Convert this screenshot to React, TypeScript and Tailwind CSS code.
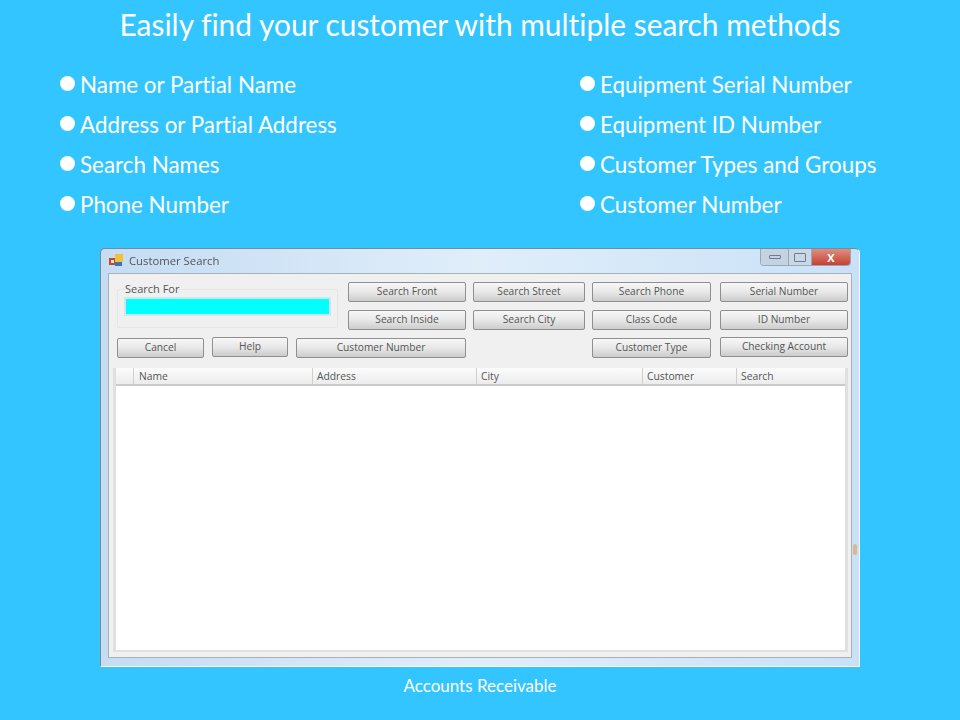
import React from "react";

const left = ["Name or Partial Name", "Address or Partial Address", "Search Names", "Phone Number"];
const right = ["Equipment Serial Number", "Equipment ID Number", "Customer Types and Groups", "Customer Number"];

function Bullets({ items }: { items: string[] }) {
  return (
    <ul className="flex flex-col">
      {items.map((t) => (
        <li key={t} className="flex h-[40px] items-center">
          <span className="mb-[4px] mr-[5px] h-[15px] w-[15px] rounded-full bg-white" />
          <span className="pb-[1px] text-[22.4px] leading-[39px] text-white">{t}</span>
        </li>
      ))}
    </ul>
  );
}

function Btn({ label, className = "" }: { label: string; className?: string }) {
  return (
    <div
      className={`flex h-[20px] shrink-0 items-center justify-center rounded-[2px] border border-[#8f8f8f] bg-gradient-to-b from-[#f7f7f7] via-[#e8e8e8] to-[#cccccc] pb-[1px] text-[10.2px] leading-none text-[#555] ${className}`}
    >
      {label}
    </div>
  );
}

const cols = [
  { label: "", w: "w-[17px]" },
  { label: "Name", w: "w-[179px]" },
  { label: "Address", w: "w-[164px]" },
  { label: "City", w: "w-[166px]" },
  { label: "Customer", w: "w-[94px]" },
  { label: "Search", w: "w-[107px]" },
];

export default function App() {
  return (
    <div className="h-[720px] w-[960px] overflow-hidden bg-[#33c5ff] font-['Lato','Liberation_Sans',sans-serif] [font-variant-ligatures:none]">
      <h1 className="pt-[5px] text-center text-[29.9px] leading-[38px] font-normal text-white">
        Easily find your customer with multiple search methods
      </h1>
      <div className="mt-[22px] flex pl-[60px]">
        <div className="w-[520px]">
          <Bullets items={left} />
        </div>
        <Bullets items={right} />
      </div>

      <div className="relative ml-[100px] mt-[23px] flex h-[419px] w-[760px] flex-col rounded-t-[5px] border border-[#7d8a96] border-b-white border-r-white bg-gradient-to-r from-[#c5dcf3] via-[#e0eefa] to-[#c9e1f7] font-['Open_Sans','Liberation_Sans',sans-serif] blur-[0.4px]">
        <div className="flex h-[24px] shrink-0 items-start pl-[8px]">
          <svg width="15" height="15" viewBox="0 0 15 15" className="mt-[4px]">
            <rect x="0" y="5" width="7" height="7" fill="#c8452e" />
            <rect x="6" y="1" width="8" height="8" fill="#f0c23c" />
            <rect x="6" y="9" width="7" height="4" fill="#3d6fc4" />
            <rect x="2" y="7" width="3" height="3" fill="#f7e9c8" />
          </svg>
          <span className="ml-[5px] mt-[4px] text-[11.3px] leading-[16px] text-[#555]">Customer Search</span>
          <div className="ml-auto mr-[8px] flex h-[17px] w-[91px] overflow-hidden rounded-b-[4px] border border-t-0 border-[#9aa7b5]">
            <div className="flex w-[27px] items-center justify-center bg-[#c3d3e3]">
              <span className="h-[4px] w-[12px] rounded-[1px] border border-[#778]" />
            </div>
            <div className="flex w-[23px] items-center justify-center border-l border-[#9aa7b5] bg-[#c8d8e6]">
              <span className="h-[9px] w-[12px] rounded-[1px] border border-[#778]" />
            </div>
            <div className="flex flex-1 items-center justify-center border-l border-[#9aa7b5] bg-gradient-to-b from-[#dc8d82] to-[#c63f30] text-[11px] font-bold leading-none text-white">
              X
            </div>
          </div>
        </div>

        <div className="mx-[7px] flex h-[385px] flex-col border border-[#a8b0b8] bg-[#f0f0f0] pb-[5px] pl-[8px] pr-[3px]">
          <div className="flex pt-[8px]">
            <div className="h-[48px] w-[221px] shrink-0">
              <div className="mt-[7px] h-[39px] rounded-[2px] border border-[#e6e6e6] pl-[6px]">
                <div className="-mt-[8px] ml-[1px] w-fit bg-[#f0f0f0] text-[11px] leading-[14px] text-[#555]">Search For</div>
                <div className="mt-[1px] h-[19px] w-[207px] border-2 border-[#c8e8f2] bg-[#00ffff]" />
              </div>
            </div>
            <div className="ml-[10px] grid grid-cols-[118px_112px_119px_130px] gap-x-[7px] gap-y-[8px]">
              <Btn label="Search Front" />
              <Btn label="Search Street" />
              <Btn label="Search Phone" />
              <Btn label="Serial Number" className="ml-[2px]" />
              <Btn label="Search Inside" />
              <Btn label="Search City" />
              <Btn label="Class Code" />
              <Btn label="ID Number" className="ml-[2px]" />
            </div>
          </div>
          <div className="mt-[7px] flex items-start">
            <Btn label="Cancel" className="mt-[1px] w-[87px]" />
            <Btn label="Help" className="ml-[8px] w-[76px]" />
            <Btn label="Customer Number" className="ml-[8px] mt-[1px] w-[170px]" />
            <Btn label="Customer Type" className="ml-[126px] mt-[1px] w-[119px]" />
            <Btn label="Checking Account" className="ml-[9px] w-[128px]" />
          </div>
          <div className="-ml-[4px] mt-[10px] flex w-[735px] flex-1 flex-col border-[3px] border-t-0 border-b-2 border-[#e0e0e0] bg-white">
            <div className="flex h-[18px] shrink-0 border-b-2 border-[#c9c9c9] bg-gradient-to-b from-[#fbfbfb] to-[#ececec]">
              {cols.map((c, i) => (
                <div
                  key={c.label}
                  className={`${c.w} flex items-center pl-[4px] text-[10.3px] leading-none text-[#555] ${i > 0 ? "border-l border-[#cfcfcf]" : ""} ${i === 1 ? "pl-[5px]" : ""}`}
                >
                  {c.label}
                </div>
              ))}
            </div>
          </div>
        </div>
        <span className="absolute left-[752px] top-[295px] h-[11px] w-[4px] rounded-full bg-[#d8b98a]" />
      </div>

      <div className="mt-[9px] text-center text-[17px] leading-[20px] text-white">Accounts Receivable</div>
    </div>
  );
}
